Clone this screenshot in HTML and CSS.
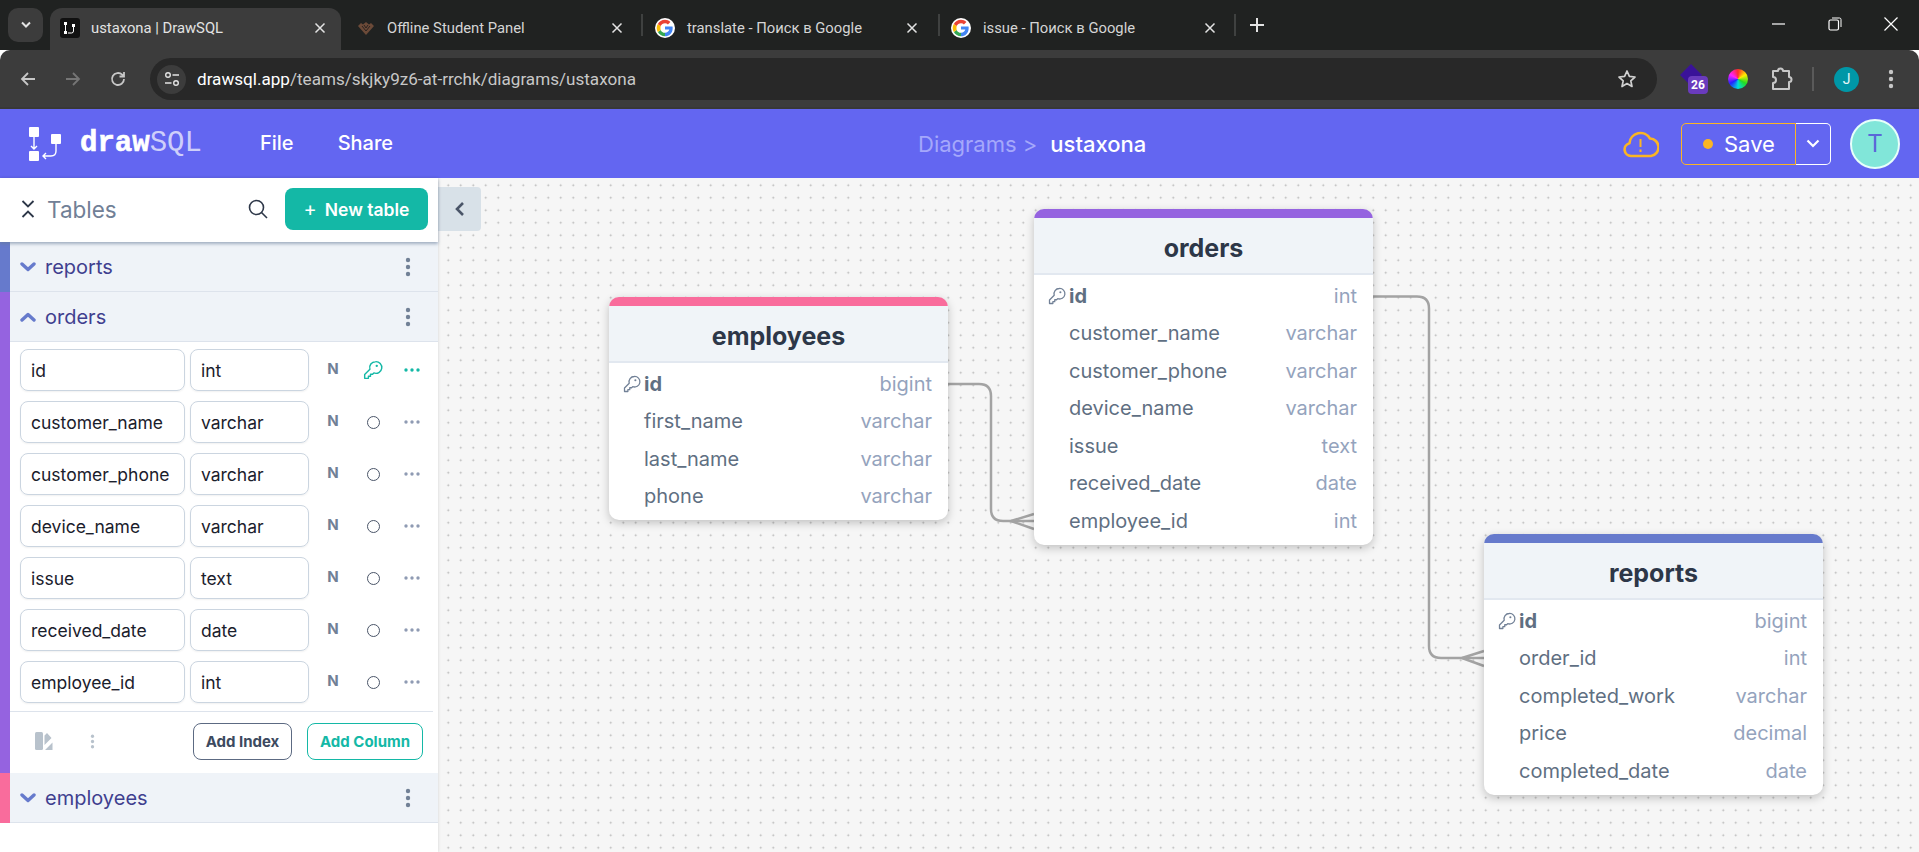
FILE: index.html
```html
<!DOCTYPE html>
<html lang="en">

<head>
    <meta charset="UTF-8">
    <title>ustaxona | DrawSQL</title>
    <link rel="stylesheet" href="styles.css">
</head>

<body>
    <svg class="defs" width="0" height="0">
        <symbol id="g-logo" viewBox="0 0 24 24">
            <circle cx="12" cy="12" r="12" fill="#fff" />
            <path d="M21 10.2h-9v3.7h5.2c-.5 2.4-2.6 3.8-5.2 3.8V22c4.800 0 9.200-3.300 9.200-10 0-.6 0-1.200-.2-1.800z" fill="#4285f4" />
            <path d="M6.800 14.300 3.400 16.900C5 20 8.200 22 12 22v-4.300c-2.400 0-4.400-1.400-5.200-3.400z" fill="#34a853" />
            <path d="M6.800 9.700 3.400 7.100C2.500 8.700 2 10.300 2 12s.5 3.300 1.400 4.900l3.400-2.600c-.4-1.400-.4-3.200 0-4.600z" fill="#fbbc05" />
            <path d="M12 6.300c1.400 0 2.600.5 3.500 1.400l3-3C16.700 3 14.500 2 12 2 8.200 2 5 4 3.400 7.100l3.400 2.600C7.600 7.700 9.600 6.300 12 6.300z" fill="#ea4335" />
        </symbol>
        <symbol id="key" viewBox="0 0 24 24">
            <path d="M15 2a7 7 0 0 0-6.700 9L2 17.300V22h4.500v-2.500H9V17h2.500l1.500-1.500A7 7 0 1 0 15 2z" fill="none" stroke="currentColor" stroke-width="1.700" stroke-linejoin="round" />
            <circle cx="16.500" cy="7" r="1.400" fill="currentColor" />
        </symbol>
        <symbol id="chev-down" viewBox="0 0 16 10">
            <path d="M2 2l6 5.500L14 2" fill="none" stroke="currentColor" stroke-width="3.400" stroke-linecap="round" stroke-linejoin="round" />
        </symbol>
        <symbol id="chev-up" viewBox="0 0 16 10">
            <path d="M2 8l6-5.500L14 8" fill="none" stroke="currentColor" stroke-width="3.400" stroke-linecap="round" stroke-linejoin="round" />
        </symbol>
        <symbol id="kebab" viewBox="0 0 6 20">
            <circle cx="3" cy="3" r="2.200" fill="currentColor" />
            <circle cx="3" cy="10" r="2.200" fill="currentColor" />
            <circle cx="3" cy="17" r="2.200" fill="currentColor" />
        </symbol>
        <symbol id="dots" viewBox="0 0 16 4">
            <circle cx="2" cy="2" r="1.700" fill="currentColor" />
            <circle cx="8" cy="2" r="1.700" fill="currentColor" />
            <circle cx="14" cy="2" r="1.700" fill="currentColor" />
        </symbol>
        <symbol id="close" viewBox="0 0 12 12">
            <path d="M1.500 1.500l9 9M10.500 1.500l-9 9" fill="none" stroke="currentColor" stroke-width="1.500" />
        </symbol>
    </svg>

    <div class="tabstrip">
        <div class="tab-menu">
            <svg width="12" height="8" viewBox="0 0 12 8"><path d="M2 1.500l4 4 4-4" fill="none" stroke="#e3e3e3" stroke-width="2" /></svg>
        </div>
        <div class="tab tab-active">
            <span class="fav-draw">
                <svg width="14" height="14" viewBox="0 0 14 14">
                    <rect x="1" y="1" width="3" height="3" fill="#fff" />
                    <rect x="9" y="3" width="3" height="3" fill="#fff" />
                    <rect x="1" y="10" width="3" height="3" fill="#fff" />
                    <path d="M2.500 4v6M10.500 6v4q0 2-2 2H5" fill="none" stroke="#fff" stroke-width="1" />
                </svg>
            </span>
            <span class="tab-title">ustaxona | DrawSQL</span>
            <svg class="tab-close" width="12" height="12"><use href="#close" /></svg>
        </div>
        <div class="tab tab-student">
            <svg class="fav" width="18" height="18" viewBox="0 0 18 18">
                <path d="M9 16 1 7l3-3 2 1.500L9 3l3 2.500L14 4l3 3z" fill="#6b4a38" />
                <path d="M5 7l4 5 4-5M7 6l2 3 2-3" fill="none" stroke="#2a2320" stroke-width="1" />
            </svg>
            <span class="tab-title tab-dim">Offline Student Panel</span>
            <svg class="tab-close" width="12" height="12"><use href="#close" /></svg>
        </div>
        <span class="tab-sep"></span>
        <div class="tab tab-translate">
            <svg class="fav" width="20" height="20"><use href="#g-logo" /></svg>
            <span class="tab-title tab-dim">translate - Поиск в Google</span>
            <svg class="tab-close" width="12" height="12"><use href="#close" /></svg>
        </div>
        <span class="tab-sep"></span>
        <div class="tab tab-issue">
            <svg class="fav" width="20" height="20"><use href="#g-logo" /></svg>
            <span class="tab-title tab-dim">issue - Поиск в Google</span>
            <svg class="tab-close" width="12" height="12"><use href="#close" /></svg>
        </div>
        <span class="tab-sep"></span>
        <svg class="tab-plus" width="14" height="14" viewBox="0 0 14 14"><path d="M7 0v14M0 7h14" stroke="#e3e3e3" stroke-width="2" /></svg>
        <div class="win-controls">
            <svg width="14" height="14" viewBox="0 0 14 14"><path d="M0 7h13" stroke="#fff" stroke-width="1.200" /></svg>
            <svg width="14" height="14" viewBox="0 0 14 14"><rect x="1" y="3" width="9.500" height="10" rx="1.500" fill="none" stroke="#fff" stroke-width="1.200" /><path d="M4 1h7.500q1.500 0 1.500 1.500V10" fill="none" stroke="#fff" stroke-width="1" /></svg>
            <svg width="14" height="14" viewBox="0 0 14 14"><path d="M.5.500l13 13M13.500.500l-13 13" stroke="#fff" stroke-width="1.200" /></svg>
        </div>
    </div>

    <div class="toolbar">
        <div class="nav-btns">
            <svg width="18" height="18" viewBox="0 0 18 18"><path d="M16 9H3M9 3 3 9l6 6" fill="none" stroke="#c7c7c7" stroke-width="1.800" /></svg>
            <svg width="18" height="18" viewBox="0 0 18 18"><path d="M2 9h13M9 3l6 6-6 6" fill="none" stroke="#757575" stroke-width="1.800" /></svg>
            <svg width="18" height="18" viewBox="0 0 18 18"><path d="M15 9a6 6 0 1 1-1.800-4.300L15 6.500M15 2v4.500h-4.500" fill="none" stroke="#c7c7c7" stroke-width="1.800" /></svg>
        </div>
        <div class="omnibox">
            <span class="site-info">
                <svg width="16" height="16" viewBox="0 0 16 16">
                    <circle cx="4" cy="4" r="2.300" fill="none" stroke="#e3e3e3" stroke-width="1.400" />
                    <path d="M8.500 4H15M1 12h6.500" stroke="#e3e3e3" stroke-width="1.400" />
                    <circle cx="12" cy="12" r="2.300" fill="none" stroke="#e3e3e3" stroke-width="1.400" />
                </svg>
            </span>
            <span class="url"><span class="url-host">drawsql.app</span>/teams/skjky9z6-at-rrchk/diagrams/ustaxona</span>
            <svg class="star" width="20" height="20" viewBox="0 0 20 20"><path d="M10 2l2.400 5.400 5.600.6-4.200 3.800 1.200 5.700-5-2.900-5 2.900 1.200-5.700L2 8l5.600-.6z" fill="none" stroke="#d0d0d0" stroke-width="1.700" stroke-linejoin="round" /></svg>
        </div>
        <div class="ext-icons">
            <span class="ext-diamond">
                <svg width="24" height="24" viewBox="0 0 24 24"><path d="M11 1l11 11-11 11L0 12z" fill="#3a1299" /></svg>
                <span class="ext-badge">26</span>
            </span>
            <span class="ext-wheel"></span>
            <svg class="ext-puzzle" width="22" height="24" viewBox="0 0 22 24"><path d="M2 4h5a2.500 2.500 0 0 1 5 0h6v6a2.500 2.500 0 0 1 0 5v7H2v-6a3 3 0 0 0 0-6z" fill="none" stroke="#c7c7c7" stroke-width="2" stroke-linejoin="round" /></svg>
            <span class="ext-sep"></span>
            <span class="profile">J</span>
            <svg class="more" width="6" height="20"><use href="#kebab" /></svg>
        </div>
    </div>

    <header class="app-header">
        <div class="logo">
            <svg width="32" height="34" viewBox="0 0 32 34">
                <rect x="0" y="0" width="10" height="10" rx="1" fill="#fff" />
                <rect x="22" y="7" width="10" height="10" rx="1" fill="#fff" />
                <rect x="0" y="24" width="10" height="10" rx="1" fill="#fff" />
                <path d="M5 10v12M2 19l3 3 3-3M27 17v7q0 5-5 5h-8M17 26l-3 3 3 3" fill="none" stroke="#fff" stroke-width="1.400" />
            </svg>
            <span class="logo-text"><b>draw</b>SQL</span>
        </div>
        <nav class="app-nav">
            <a>File</a>
            <a>Share</a>
        </nav>
        <div class="crumbs">
            <span class="crumb-dim">Diagrams &gt;</span>
            <span class="crumb-name">ustaxona</span>
        </div>
        <svg class="cloud" width="36" height="30" viewBox="0 0 36 30">
            <path d="M8 27a6.500 6.500 0 0 1-1.500-12.800A11 11 0 0 1 27 9.500 8.800 8.800 0 0 1 28 27z" fill="none" stroke="#fbb524" stroke-width="2.600" stroke-linejoin="round" />
            <path d="M17.500 10v8M17.500 20.500v2.500" stroke="#fbb524" stroke-width="2" />
        </svg>
        <div class="save-group">
            <button class="save-btn"><span class="save-dot"></span>Save</button>
            <button class="save-caret">
                <svg width="14" height="9" viewBox="0 0 14 9"><path d="M1.500 1.500 7 7l5.500-5.500" fill="none" stroke="#fff" stroke-width="2.200" /></svg>
            </button>
        </div>
        <div class="avatar">T</div>
    </header>

    <main class="workspace">
        <aside class="sidebar">
            <div class="side-top">
                <svg class="collapse-all" width="14" height="20" viewBox="0 0 14 20"><path d="M1.500 2l5.500 5.500L12.500 2M1.500 18 7 12.500l5.500 5.500" fill="none" stroke="#2d3748" stroke-width="1.800" /></svg>
                <span class="side-title">Tables</span>
                <svg class="search" width="20" height="20" viewBox="0 0 20 20"><circle cx="8.500" cy="8.500" r="7" fill="none" stroke="#2d3748" stroke-width="1.600" /><path d="M13.500 13.500 19 19" stroke="#2d3748" stroke-width="1.600" /></svg>
                <button class="new-table"><span class="plus">+</span>New table</button>
            </div>

            <div class="side-section sec-reports">
                <div class="sec-head">
                    <svg class="sec-chev" width="16" height="10"><use href="#chev-down" /></svg>
                    <span class="sec-name">reports</span>
                    <svg class="sec-menu" width="6" height="20"><use href="#kebab" /></svg>
                </div>
            </div>

            <div class="side-section sec-orders">
                <div class="sec-head">
                    <svg class="sec-chev" width="16" height="10"><use href="#chev-up" /></svg>
                    <span class="sec-name">orders</span>
                    <svg class="sec-menu" width="6" height="20"><use href="#kebab" /></svg>
                </div>
                <div class="col-list">
                    <div class="col-row">
                        <div class="col-input">id</div>
                        <div class="col-input">int</div>
                        <span class="col-n">N</span>
                        <svg class="col-key" width="20" height="20"><use href="#key" /></svg>
                        <svg class="col-dots col-dots-on" width="16" height="4"><use href="#dots" /></svg>
                    </div>
                    <div class="col-row">
                        <div class="col-input">customer_name</div>
                        <div class="col-input">varchar</div>
                        <span class="col-n">N</span>
                        <span class="col-ring"></span>
                        <svg class="col-dots" width="16" height="4"><use href="#dots" /></svg>
                    </div>
                    <div class="col-row">
                        <div class="col-input">customer_phone</div>
                        <div class="col-input">varchar</div>
                        <span class="col-n">N</span>
                        <span class="col-ring"></span>
                        <svg class="col-dots" width="16" height="4"><use href="#dots" /></svg>
                    </div>
                    <div class="col-row">
                        <div class="col-input">device_name</div>
                        <div class="col-input">varchar</div>
                        <span class="col-n">N</span>
                        <span class="col-ring"></span>
                        <svg class="col-dots" width="16" height="4"><use href="#dots" /></svg>
                    </div>
                    <div class="col-row">
                        <div class="col-input">issue</div>
                        <div class="col-input">text</div>
                        <span class="col-n">N</span>
                        <span class="col-ring"></span>
                        <svg class="col-dots" width="16" height="4"><use href="#dots" /></svg>
                    </div>
                    <div class="col-row">
                        <div class="col-input">received_date</div>
                        <div class="col-input">date</div>
                        <span class="col-n">N</span>
                        <span class="col-ring"></span>
                        <svg class="col-dots" width="16" height="4"><use href="#dots" /></svg>
                    </div>
                    <div class="col-row">
                        <div class="col-input">employee_id</div>
                        <div class="col-input">int</div>
                        <span class="col-n">N</span>
                        <span class="col-ring"></span>
                        <svg class="col-dots" width="16" height="4"><use href="#dots" /></svg>
                    </div>
                </div>
                <div class="sec-foot">
                    <svg class="swatch" width="18" height="18" viewBox="0 0 18 18">
                        <rect x="0" y="0" width="8" height="18" rx="1.500" fill="#b8c2cc" />
                        <path d="M9.500 3.500 12 1l4.500 5-7 7zM10 18l7.500-7.500V18z" fill="#b8c2cc" />
                    </svg>
                    <svg class="foot-menu" width="5" height="15" viewBox="0 0 6 20"><use href="#kebab" /></svg>
                    <button class="btn-index">Add Index</button>
                    <button class="btn-column">Add Column</button>
                </div>
            </div>

            <div class="side-section sec-employees">
                <div class="sec-head">
                    <svg class="sec-chev" width="16" height="10"><use href="#chev-down" /></svg>
                    <span class="sec-name">employees</span>
                    <svg class="sec-menu" width="6" height="20"><use href="#kebab" /></svg>
                </div>
            </div>
        </aside>

        <section class="canvas">
            <button class="side-toggle">
                <svg width="10" height="16" viewBox="0 0 10 16"><path d="M8 2 2 8l6 6" fill="none" stroke="#4a5568" stroke-width="2.600" /></svg>
            </button>

            <!-- coordinates are relative to the canvas -->
            <svg class="links" width="1481" height="674" viewBox="0 0 1481 674">
                <g fill="none" stroke="#a3a3a3" stroke-width="2.500">
                    <path d="M510 206h31q12 0 12 12v113q0 12 12 12h31" />
                    <path d="M573 343l23-7M573 343l23 8" />
                    <path d="M935 118.500h44q12 0 12 12V468q0 12 12 12h43" />
                    <path d="M1024 480l22-7M1024 480l22 8" />
                </g>
            </svg>

            <article class="db-table tbl-employees">
                <h3 class="db-head">employees</h3>
                <div class="db-row db-pk"><svg class="db-key" width="18" height="18"><use href="#key" /></svg><span>id</span><em>bigint</em></div>
                <div class="db-row"><span>first_name</span><em>varchar</em></div>
                <div class="db-row"><span>last_name</span><em>varchar</em></div>
                <div class="db-row"><span>phone</span><em>varchar</em></div>
            </article>

            <article class="db-table tbl-orders">
                <h3 class="db-head">orders</h3>
                <div class="db-row db-pk"><svg class="db-key" width="18" height="18"><use href="#key" /></svg><span>id</span><em>int</em></div>
                <div class="db-row"><span>customer_name</span><em>varchar</em></div>
                <div class="db-row"><span>customer_phone</span><em>varchar</em></div>
                <div class="db-row"><span>device_name</span><em>varchar</em></div>
                <div class="db-row"><span>issue</span><em>text</em></div>
                <div class="db-row"><span>received_date</span><em>date</em></div>
                <div class="db-row"><span>employee_id</span><em>int</em></div>
            </article>

            <article class="db-table tbl-reports">
                <h3 class="db-head">reports</h3>
                <div class="db-row db-pk"><svg class="db-key" width="18" height="18"><use href="#key" /></svg><span>id</span><em>bigint</em></div>
                <div class="db-row"><span>order_id</span><em>int</em></div>
                <div class="db-row"><span>completed_work</span><em>varchar</em></div>
                <div class="db-row"><span>price</span><em>decimal</em></div>
                <div class="db-row"><span>completed_date</span><em>date</em></div>
            </article>
        </section>
    </main>
</body>

</html>
```

FILE: styles.css
```css
* {
    margin: 0;
    padding: 0;
    box-sizing: border-box;
}

html,
body {
    width: 1919px;
    height: 852px;
    overflow: hidden;
}

body {
    font-family: Inter, "Liberation Sans", sans-serif;
    display: flex;
    flex-direction: column;
    background: #fff;
}

button {
    font-family: inherit;
    background: none;
    border: none;
}

.defs {
    position: absolute;
}

/* Browser tabs */
.tabstrip {
    height: 50px;
    flex: none;
    display: flex;
    align-items: flex-end;
    background: #202221;
    font-family: Roboto, "Noto Sans", sans-serif;
    font-size: 14.800px;
    color: #e3e3e3;
    position: relative;
}

.tab-menu {
    width: 35px;
    height: 34px;
    margin: 0 7px 8px 8px;
    background: #3c3c3c;
    border-radius: 10px;
    display: flex;
    align-items: center;
    justify-content: center;
}

.tab {
    height: 42px;
    display: flex;
    align-items: center;
    padding-bottom: 2px;
}

.tab-active {
    width: 291px;
    background: #3c3c3c;
    border-radius: 12px 12px 0 0;
    padding-left: 10px;
    padding-right: 15px;
}

.tab-student {
    width: 300px;
    padding-left: 16px;
    padding-right: 18px;
}

.tab-translate {
    width: 295px;
    padding-left: 12px;
    padding-right: 20px;
}

.tab-issue {
    width: 294px;
    padding-left: 11px;
    padding-right: 18px;
}

.fav-draw {
    width: 20px;
    height: 20px;
    background: #111;
    border-radius: 3px;
    display: flex;
    align-items: center;
    justify-content: center;
    margin-right: 11px;
}

.fav {
    margin-right: 12px;
    flex: none;
}

.tab-title {
    flex: 1;
    white-space: nowrap;
}

.tab-dim {
    color: #d5d5d5;
}

.tab-close {
    color: #e3e3e3;
    flex: none;
}

.tab-sep {
    width: 2px;
    height: 22px;
    background: #3f4140;
    margin-bottom: 14px;
    flex: none;
}

.tab-plus {
    margin: 0 0 18px 14px;
}

.win-controls {
    margin-left: auto;
    display: flex;
    gap: 42px;
    padding-right: 21px;
    padding-bottom: 19px;
}

/* Browser toolbar */
.toolbar {
    height: 59px;
    flex: none;
    background: #3c3c3c;
    border-radius: 10px 10px 0 0;
    border-bottom: 2px solid #383838;
    display: flex;
    align-items: flex-start;
    padding-top: 8px;
}

.nav-btns {
    width: 150px;
    height: 42px;
    display: flex;
    align-items: center;
    gap: 27px;
    padding-left: 19px;
    flex: none;
}

.omnibox {
    width: 1507px;
    height: 42px;
    background: #282828;
    border-radius: 21px;
    display: flex;
    align-items: center;
    padding-left: 7px;
    padding-right: 20px;
    flex: none;
}

.site-info {
    width: 29px;
    height: 29px;
    border-radius: 50%;
    background: #3c3c3c;
    display: flex;
    align-items: center;
    justify-content: center;
    margin-right: 11px;
}

.url {
    font-family: Roboto, "Noto Sans", sans-serif;
    font-size: 17.100px;
    color: #c7c7c7;
    flex: 1;
}

.url-host {
    color: #fff;
}

.ext-icons {
    flex: 1;
    height: 42px;
    display: flex;
    align-items: center;
    padding-left: 23px;
}

.ext-diamond {
    width: 30px;
    height: 32px;
    position: relative;
}

.ext-diamond svg {
    position: absolute;
    left: 0;
    top: 0;
}

.ext-badge {
    position: absolute;
    left: 8px;
    top: 13px;
    width: 20px;
    height: 18px;
    background: #6a3bbd;
    border-radius: 4px;
    color: #fff;
    font-family: Roboto, sans-serif;
    font-size: 12px;
    font-weight: 700;
    text-align: center;
    line-height: 18px;
}

.ext-wheel {
    width: 20px;
    height: 20px;
    border-radius: 50%;
    margin-left: 18px;
    background: conic-gradient(#ff2a2a, #ffee00, #22dd22, #00dddd, #2222ff, #ff22ff, #ff2a2a);
}

.ext-puzzle {
    margin-left: 23px;
}

.ext-sep {
    width: 2px;
    height: 24px;
    background: #5a5a5a;
    margin-left: 19px;
}

.profile {
    width: 25px;
    height: 25px;
    border-radius: 50%;
    background: #0097a7;
    color: #e6f7f9;
    font-family: Roboto, sans-serif;
    font-size: 14px;
    text-align: center;
    line-height: 25px;
    margin-left: 20px;
}

.more {
    color: #c7c7c7;
    margin-left: 29px;
}

/* App header */
.app-header {
    height: 69px;
    flex: none;
    background: #6366f1;
    color: #fff;
    display: flex;
    align-items: center;
    position: relative;
}

.logo {
    display: flex;
    align-items: center;
    margin-left: 29px;
    width: 231px;
}

.logo-text {
    font-family: "Liberation Mono", monospace;
    font-size: 29px;
    margin-left: 19px;
    color: rgba(255, 255, 255, 0.7);
}

.logo-text b {
    color: #fff;
    -webkit-text-stroke: 0.6px #fff;
}

.app-nav {
    display: flex;
    gap: 44px;
    font-size: 20px;
    font-weight: 500;
    margin-top: -2px;
}

.crumbs {
    position: absolute;
    left: 918px;
    top: 0;
    height: 69px;
    display: flex;
    align-items: center;
    gap: 13px;
    font-size: 22px;
}

.crumb-dim {
    color: #a5a8fb;
}

.crumb-name {
    font-weight: 500;
}

.cloud {
    margin-left: auto;
    flex: none;
}

.save-group {
    display: flex;
    height: 42px;
    margin-left: 22px;
}

.save-btn {
    width: 115px;
    border: 1px solid #fbb524;
    border-radius: 5px 0 0 5px;
    color: #fff;
    font-size: 22px;
    display: flex;
    align-items: center;
    padding-left: 21px;
}

.save-dot {
    width: 10px;
    height: 10px;
    border-radius: 50%;
    background: #fbb524;
    margin-right: 11px;
}

.save-caret {
    width: 35px;
    border: 1px solid #fff;
    border-left: none;
    border-radius: 0 5px 5px 0;
    display: flex;
    align-items: center;
    justify-content: center;
}

.avatar {
    width: 50px;
    height: 50px;
    border-radius: 50%;
    background: #81e6d9;
    border: 2px solid #e6fffa;
    color: #5a67d8;
    font-size: 24px;
    text-align: center;
    line-height: 46px;
    margin: 0 19px;
}

/* Main area */
.workspace {
    flex: 1;
    display: flex;
    min-height: 0;
}

.sidebar {
    width: 438px;
    flex: none;
    background: #fff;
    box-shadow: 0 0 3px rgba(0, 0, 0, 0.15);
    position: relative;
    z-index: 2;
}

.side-top {
    height: 64px;
    display: flex;
    align-items: center;
    padding: 0 10px 2px 21px;
    box-shadow: 0 2px 3px rgba(100, 120, 150, 0.55);
    position: relative;
    z-index: 1;
}

.side-title {
    font-size: 22.500px;
    color: #718096;
    margin-left: 12px;
}

.search {
    margin-left: auto;
    color: #2d3748;
}

.new-table {
    width: 143px;
    height: 42px;
    margin-left: 17px;
    background: #14b8a6;
    color: #fff;
    border-radius: 8px;
    font-size: 17.500px;
    font-weight: 600;
}

.plus {
    font-weight: 400;
    font-size: 20px;
    margin-right: 8px;
}

.side-section {
    border-left: 10px solid #667acc;
}

.sec-orders {
    border-left-color: #9563e0;
}

.sec-employees {
    border-left-color: #f96c9c;
}

.sec-head {
    height: 50px;
    background: #eff3f8;
    border-bottom: 1px solid #dde3ec;
    display: flex;
    align-items: center;
    padding-left: 10px;
    padding-right: 27px;
}

.sec-chev {
    color: #667acc;
}

.sec-name {
    font-size: 20px;
    color: #3f3f8f;
    margin-left: 9px;
    flex: 1;
}

.sec-menu {
    color: #718096;
}

.col-list {
    padding: 7px 0 8px 10px;
    display: flex;
    flex-direction: column;
    gap: 10px;
}

.col-row {
    height: 42px;
    display: grid;
    grid-template-columns: 165px 119px 38px 32px 36px;
    column-gap: 5px;
    align-items: center;
    justify-items: center;
}

.col-row .col-input {
    justify-self: stretch;
}

.col-input {
    height: 42px;
    border: 1px solid #cbd5e0;
    border-radius: 8px;
    box-shadow: 0 1px 2px rgba(0, 0, 0, 0.06);
    font-size: 17.500px;
    color: #1a202c;
    line-height: 41px;
    padding-left: 10px;
    white-space: nowrap;
}

.col-n {
    font-size: 15px;
    font-weight: 700;
    color: #718096;
    margin-bottom: 3px;
}

.col-key {
    color: #14b8a6;
}

.col-ring {
    width: 13px;
    height: 13px;
    border: 1px solid #4a5568;
    border-radius: 50%;
}

.col-dots {
    color: #8f9bb3;
}

.col-dots-on {
    color: #14b8a6;
}

.sec-foot {
    height: 62px;
    margin-right: 5px;
    border-top: 1px solid #dde3ec;
    display: flex;
    align-items: center;
    padding-left: 25px;
    padding-bottom: 3px;
}

.foot-menu {
    color: #b8c2cc;
    margin-left: 37px;
}

.btn-index,
.btn-column {
    height: 37px;
    border-radius: 8px;
    background: #fff;
    font-size: 15px;
    font-weight: 700;
}

.btn-index {
    width: 99px;
    margin-left: 98px;
    border: 1px solid #5c6a82;
    color: #3c4a60;
}

.btn-column {
    width: 116px;
    margin-left: 15px;
    border: 1px solid #14b8a6;
    color: #14b8a6;
}

/* Diagram canvas */
.canvas {
    flex: 1;
    position: relative;
    background-color: #f6f6f6;
    background-image: radial-gradient(circle, #b5b5b5 0.8px, transparent 1.1px);
    background-size: 12.500px 12.500px;
    background-position: 4px 1px;
    overflow: hidden;
}

.side-toggle {
    position: absolute;
    left: 0;
    top: 9px;
    width: 43px;
    height: 44px;
    background: #d8e1e8;
    border-radius: 0 4px 4px 0;
    display: flex;
    align-items: center;
    justify-content: center;
}

.links {
    position: absolute;
    left: 0;
    top: 0;
}

.db-table {
    position: absolute;
    width: 339px;
    background: #fff;
    border-radius: 10px;
    border-top: 9px solid;
    box-shadow: 0 3px 10px rgba(0, 0, 0, 0.22);
    padding-bottom: 5px;
}

.tbl-employees {
    left: 171px;
    top: 119px;
    border-top-color: #f96c9c;
}

.tbl-orders {
    left: 596px;
    top: 31px;
    border-top-color: #9563e0;
}

.tbl-reports {
    left: 1046px;
    top: 356px;
    border-top-color: #667acc;
}

.db-head {
    height: 57px;
    background: #f0f4f8;
    border-bottom: 2px solid #e2e8f0;
    padding-top: 5px;
    font-size: 25px;
    font-weight: 700;
    color: #2d3748;
    text-align: center;
    line-height: 50px;
    margin-bottom: 2px;
}

.db-row {
    height: 37.500px;
    display: flex;
    align-items: center;
    padding: 0 16px 0 35px;
    font-size: 20px;
    color: #5f6f82;
    position: relative;
}

.db-row span {
    flex: 1;
}

.db-row em {
    font-style: normal;
    color: #94a3bd;
}

.db-pk span {
    font-weight: 700;
}

.db-key {
    position: absolute;
    left: 14px;
    top: 10px;
    color: #718096;
}
```
